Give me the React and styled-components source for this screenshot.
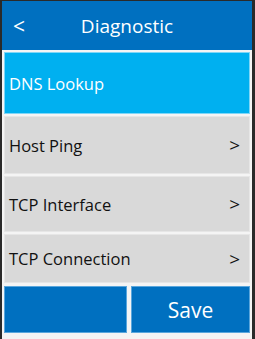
import React from 'react';
import styled, { createGlobalStyle } from 'styled-components';

const GlobalStyle = createGlobalStyle`
  html, body {
    margin: 0;
    padding: 0;
    background: #ffffff;
  }
  * {
    box-sizing: border-box;
  }
`;

const Frame = styled.div`
  width: 255px;
  height: 339px;
  display: flex;
  flex-direction: column;
  background: #f4f4f4;
  border-left: 2px solid #2a2a2a;
  border-right: 3px solid #2a2a2a;
  border-top: 1px solid #2a2a2a;
  font-family: "Open Sans", "Noto Sans", sans-serif;
  overflow: hidden;
`;

const Header = styled.header`
  position: relative;
  height: 49px;
  flex: none;
  display: flex;
  align-items: center;
  justify-content: center;
  background: #0070c0;
  color: #ffffff;
`;

const BackButton = styled.span`
  position: absolute;
  left: 11px;
  top: 13px;
  font-size: 21px;
  line-height: 24px;
`;

const Title = styled.h1`
  margin: 0;
  font-size: 19px;
  font-weight: 400;
  line-height: 24px;
`;

const List = styled.div`
  flex: 1;
  display: flex;
  flex-direction: column;
  gap: 2px;
  padding: 2px 2px 0 2px;
`;

const Row = styled.div`
  height: ${(p) => p.$h}px;
  flex: none;
  display: flex;
  align-items: center;
  justify-content: space-between;
  padding: 0 9px 0 4px;
  font-size: 16.5px;
  background: ${(p) => (p.$active ? '#00b0f0' : '#d9d9d9')};
  color: ${(p) => (p.$active ? '#ffffff' : '#111111')};
  border: 1px solid ${(p) => (p.$active ? '#7fd6f7' : '#e6e6e6')};
`;

const Chevron = styled.span`
  font-size: 19px;
  line-height: 20px;
`;

const Footer = styled.div`
  display: flex;
  gap: 4px;
  height: 47px;
  margin-top: 1px;
`;

const FooterButton = styled.button`
  flex: ${(p) => p.$grow};
  height: 100%;
  margin: 0;
  padding: 0;
  background: #0070c0;
  border: 1px solid #5aa6dc;
  color: #ffffff;
  font-family: inherit;
  font-size: 21px;
`;

const items = [
  { label: 'DNS Lookup', h: 62, active: true },
  { label: 'Host Ping', h: 58 },
  { label: 'TCP Interface', h: 56 },
  { label: 'TCP Connection', h: 49 },
];

const App = () => (
  <>
    <GlobalStyle />
    <Frame>
      <Header>
        <BackButton>&lt;</BackButton>
        <Title>Diagnostic</Title>
      </Header>
      <List>
        {items.map((item) => (
          <Row key={item.label} $h={item.h} $active={item.active}>
            <span>{item.label}</span>
            {!item.active && <Chevron>&gt;</Chevron>}
          </Row>
        ))}
        <Footer>
          <FooterButton $grow={123} />
          <FooterButton $grow={119}>Save</FooterButton>
        </Footer>
      </List>
    </Frame>
  </>
);

export default App;
